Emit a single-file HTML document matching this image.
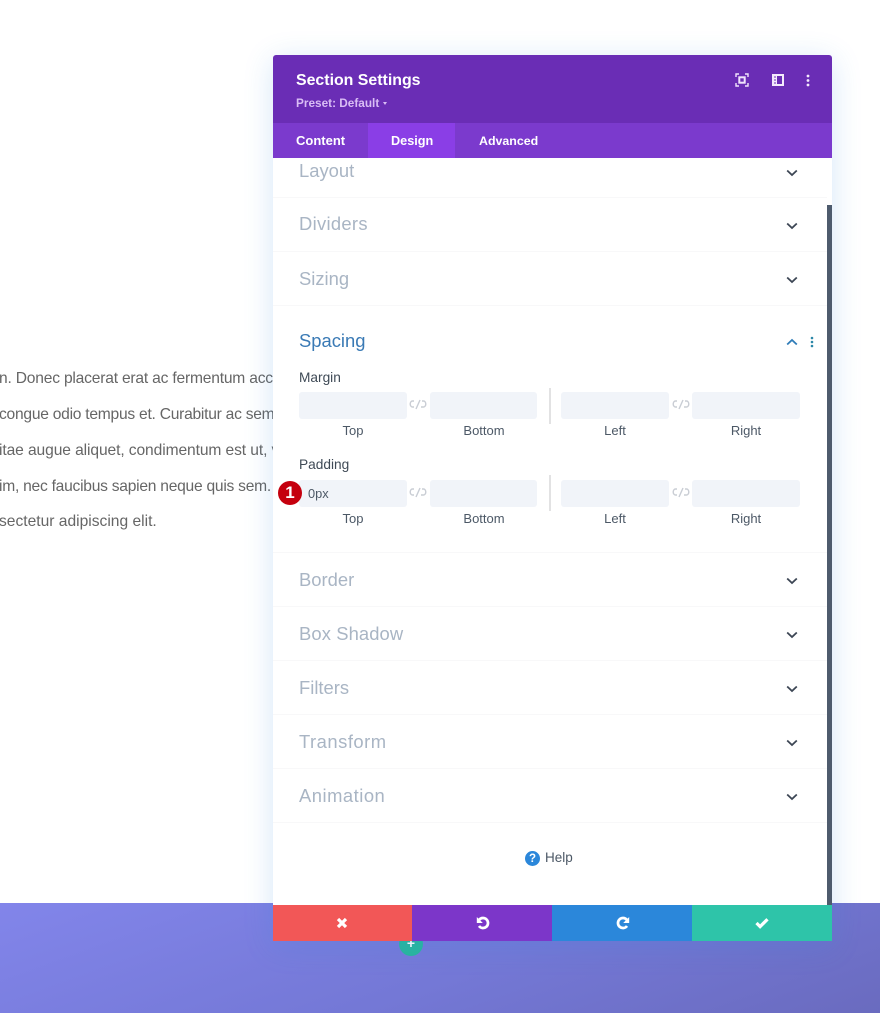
<!DOCTYPE html>
<html><head><meta charset="utf-8">
<style>
html,body{margin:0;padding:0;background:#fff}
#p{position:relative;width:880px;height:1013px;overflow:hidden;background:#fff;font-family:"Liberation Sans",sans-serif}
#p div,#p svg{position:absolute}
.t{white-space:nowrap;line-height:20px}
.body{font-size:15.6px;color:#666;left:0}
.h{left:299px;font-size:18.4px;color:#a9b5c4}
.l{font-size:13px;color:#4c5866;width:108px;text-align:center}
.lab{left:299px;font-size:13.7px;color:#3f4a56}
.in{width:108px;height:27px;background:#f1f4f9;border-radius:3px}
.sep{width:2px;height:36px;background:#e2e2e3}
.div{left:273px;width:554px;height:1px;background:#f8f8f9}
.w{color:#fff;font-weight:700}
</style></head><body>
<div id="p">
<div class="t body" style="top:369px;left:-1px;letter-spacing:-.2px">n. Donec placerat erat ac fermentum acc</div>
<div class="t body" style="top:405px;left:-1px;letter-spacing:-.25px">congue odio tempus et. Curabitur ac sem</div>
<div class="t body" style="top:441px;left:-1px;letter-spacing:-.1px">itae augue aliquet, condimentum est ut, v</div>
<div class="t body" style="top:477px;left:-1px;letter-spacing:-.25px">im, nec faucibus sapien neque quis sem. </div>
<div class="t body" style="top:512px;left:-1px">sectetur adipiscing elit.</div>

<div style="left:0;top:903px;width:880px;height:110px;background:linear-gradient(160deg,#8285ea 0%,#7478d6 55%,#6a6bbf 100%)"></div>
<div style="left:399px;top:932px;width:24px;height:24px;border-radius:50%;background:#29b79d"></div>
<div class="w t" style="left:399px;top:933px;width:24px;text-align:center;font-size:14px">+</div>

<div style="left:273px;top:55px;width:559px;height:886px;background:#fff;box-shadow:0 5px 30px rgba(43,135,218,.2);border-radius:3px 3px 0 0"></div>
<div style="left:273px;top:55px;width:559px;height:68px;background:#6a2db5;border-radius:3px 3px 0 0"></div>
<div style="left:273px;top:123px;width:559px;height:35px;background:#7b3acd"></div>
<div style="left:368px;top:123px;width:87px;height:35px;background:#8a3ee6"></div>
<div class="t w" style="left:296px;top:71px;font-size:15.9px">Section Settings</div>
<div class="t" style="left:296px;top:93px;font-size:11.8px;color:#d9bdf5;font-weight:700">Preset: Default</div>
<div style="left:383px;top:102px;width:0;height:0;border:2.5px solid transparent;border-top:3px solid #d9bdf5"></div>
<div class="t w" style="left:296px;top:131px;font-size:13px">Content</div>
<div class="t w" style="left:391px;top:131px;font-size:12.7px">Design</div>
<div class="t w" style="left:479px;top:131px;font-size:12.4px">Advanced</div>

<svg style="left:735px;top:73px" width="14" height="14" viewBox="0 0 14 14" fill="none" stroke="#f0e4fb" stroke-width="1.4"><path d="M1 4V1h3M10 1h3v3M13 10v3h-3M4 13H1v-3"/><rect x="4.3" y="4.3" width="5.4" height="5.4" stroke-width="2"/></svg>
<svg style="left:771px;top:73px" width="14" height="14" viewBox="0 0 14 14"><path fill="#f4eafc" fill-rule="evenodd" d="M1 1h12v12H1zM6 3v8h5V3z"/><path fill="#6a2db5" d="M3 3.5h2v1H3zM3 6.5h2v1H3zM3 9.5h2v1H3z"/></svg>
<svg style="left:805px;top:74px" width="6" height="13" viewBox="0 0 6 13" fill="#f4eafc"><circle cx="3" cy="2" r="1.4"/><circle cx="3" cy="6.5" r="1.4"/><circle cx="3" cy="11" r="1.4"/></svg>

<div class="t h" style="top:161px">Layout</div>
<div class="t h" style="top:214px;letter-spacing:.3px">Dividers</div>
<div class="t h" style="top:269px">Sizing</div>
<div class="t h" style="top:331px;color:#3a7ab5">Spacing</div>
<div class="t h" style="top:570px">Border</div>
<div class="t h" style="top:624px;letter-spacing:.1px">Box Shadow</div>
<div class="t h" style="top:678px">Filters</div>
<div class="t h" style="top:732px;letter-spacing:.5px">Transform</div>
<div class="t h" style="top:786px;letter-spacing:.5px">Animation</div>

<div class="div" style="top:197px"></div>
<div class="div" style="top:251px"></div>
<div class="div" style="top:305px"></div>
<div class="div" style="top:552px"></div>
<div class="div" style="top:606px"></div>
<div class="div" style="top:660px"></div>
<div class="div" style="top:714px"></div>
<div class="div" style="top:768px"></div>
<div class="div" style="top:822px"></div>

<svg style="left:786px;top:169px" width="12" height="8" viewBox="0 0 12 8" fill="none" stroke="#3c4654" stroke-width="1.8"><path d="M1.2 1.5L6 6l4.8-4.5"/></svg>
<svg style="left:786px;top:222px" width="12" height="8" viewBox="0 0 12 8" fill="none" stroke="#3c4654" stroke-width="1.8"><path d="M1.2 1.5L6 6l4.8-4.5"/></svg>
<svg style="left:786px;top:276px" width="12" height="8" viewBox="0 0 12 8" fill="none" stroke="#3c4654" stroke-width="1.8"><path d="M1.2 1.5L6 6l4.8-4.5"/></svg>
<svg style="left:786px;top:577px" width="12" height="8" viewBox="0 0 12 8" fill="none" stroke="#3c4654" stroke-width="1.8"><path d="M1.2 1.5L6 6l4.8-4.5"/></svg>
<svg style="left:786px;top:631px" width="12" height="8" viewBox="0 0 12 8" fill="none" stroke="#3c4654" stroke-width="1.8"><path d="M1.2 1.5L6 6l4.8-4.5"/></svg>
<svg style="left:786px;top:685px" width="12" height="8" viewBox="0 0 12 8" fill="none" stroke="#3c4654" stroke-width="1.8"><path d="M1.2 1.5L6 6l4.8-4.5"/></svg>
<svg style="left:786px;top:739px" width="12" height="8" viewBox="0 0 12 8" fill="none" stroke="#3c4654" stroke-width="1.8"><path d="M1.2 1.5L6 6l4.8-4.5"/></svg>
<svg style="left:786px;top:793px" width="12" height="8" viewBox="0 0 12 8" fill="none" stroke="#3c4654" stroke-width="1.8"><path d="M1.2 1.5L6 6l4.8-4.5"/></svg>
<svg style="left:786px;top:338px" width="12" height="8" viewBox="0 0 12 8" fill="none" stroke="#2f7cb8" stroke-width="1.8"><path d="M1.2 6.5L6 2l4.8 4.5"/></svg>
<svg style="left:809px;top:336px" width="6" height="12" viewBox="0 0 6 12" fill="#2b87a8"><circle cx="3" cy="2" r="1.3"/><circle cx="3" cy="6" r="1.3"/><circle cx="3" cy="10" r="1.3"/></svg>

<div class="t lab" style="top:368px">Margin</div>
<div class="t lab" style="top:455px">Padding</div>

<div class="in" style="left:299px;top:392px"></div>
<div class="in" style="left:430px;top:392px;width:107px"></div>
<div class="sep" style="left:549px;top:388px"></div>
<div class="in" style="left:561px;top:392px"></div>
<div class="in" style="left:692px;top:392px"></div>
<div class="in" style="left:299px;top:480px"></div>
<div class="in" style="left:430px;top:480px;width:107px"></div>
<div class="sep" style="left:549px;top:475px"></div>
<div class="in" style="left:561px;top:480px"></div>
<div class="in" style="left:692px;top:480px"></div>

<svg style="left:409px;top:399px" width="18" height="11" viewBox="0 0 18 11" fill="none" stroke="#c9cdd4" stroke-width="1.4"><path d="M5 2H3.5a2.3 3 0 0 0 0 6H5M7 10l4-9M13 2h1.5a2.3 3 0 0 1 0 6H12"/></svg>
<svg style="left:409px;top:487px" width="18" height="11" viewBox="0 0 18 11" fill="none" stroke="#c9cdd4" stroke-width="1.4"><path d="M5 2H3.5a2.3 3 0 0 0 0 6H5M7 10l4-9M13 2h1.5a2.3 3 0 0 1 0 6H12"/></svg>
<svg style="left:672px;top:399px" width="18" height="11" viewBox="0 0 18 11" fill="none" stroke="#c9cdd4" stroke-width="1.4"><path d="M5 2H3.5a2.3 3 0 0 0 0 6H5M7 10l4-9M13 2h1.5a2.3 3 0 0 1 0 6H12"/></svg>
<svg style="left:672px;top:487px" width="18" height="11" viewBox="0 0 18 11" fill="none" stroke="#c9cdd4" stroke-width="1.4"><path d="M5 2H3.5a2.3 3 0 0 0 0 6H5M7 10l4-9M13 2h1.5a2.3 3 0 0 1 0 6H12"/></svg>

<div class="t l" style="left:299px;top:421px">Top</div>
<div class="t l" style="left:430px;top:421px">Bottom</div>
<div class="t l" style="left:561px;top:421px">Left</div>
<div class="t l" style="left:692px;top:421px">Right</div>
<div class="t l" style="left:299px;top:509px">Top</div>
<div class="t l" style="left:430px;top:509px">Bottom</div>
<div class="t l" style="left:561px;top:509px">Left</div>
<div class="t l" style="left:692px;top:509px">Right</div>

<div class="t" style="left:308px;top:484px;font-size:12.8px;color:#4c5866">0px</div>
<div style="left:278px;top:481px;width:24px;height:24px;border-radius:50%;background:#c5000e"></div>
<div class="t" style="left:278px;top:483px;width:24px;text-align:center;font-size:17px;color:#fff;font-weight:700">1</div>

<div style="left:827px;top:205px;width:5px;height:700px;background:#4e5b6d"></div>

<div style="left:525px;top:851px;width:15px;height:15px;border-radius:50%;background:#2b87da"></div>
<div class="t w" style="left:525px;top:849px;width:15px;text-align:center;font-size:11.5px">?</div>
<div class="t" style="left:545px;top:848px;font-size:13.5px;color:#4c5866">Help</div>

<div style="left:273px;top:905px;width:139px;height:36px;background:#f25757"></div>
<div style="left:412px;top:905px;width:140px;height:36px;background:#7c36c9"></div>
<div style="left:552px;top:905px;width:140px;height:36px;background:#2b87da"></div>
<div style="left:692px;top:905px;width:140px;height:36px;background:#2ec4a9"></div>

<svg style="left:336px;top:917px" width="12" height="12" viewBox="0 0 12 12" fill="none" stroke="#fff" stroke-width="3.2"><path d="M2 2l8 8M10 2l-8 8"/></svg>
<svg style="left:475px;top:915px" width="16" height="16" viewBox="0 0 16 16" fill="none"><path d="M4.2 4.8A5 5 0 1 1 4 11" stroke="#fff" stroke-width="2.7"/><path d="M1.8 2v6h6z" fill="#fff"/></svg>
<svg style="left:615px;top:915px" width="16" height="16" viewBox="0 0 16 16" fill="none"><path d="M11.8 4.8A5 5 0 1 0 12 11" stroke="#fff" stroke-width="2.7"/><path d="M14.2 2v6h-6z" fill="#fff"/></svg>
<svg style="left:755px;top:917px" width="14" height="12" viewBox="0 0 14 12" fill="none" stroke="#fff" stroke-width="3.2"><path d="M1.5 6l3.6 3.6 7.4-7.4"/></svg>
</div>
</body></html>
